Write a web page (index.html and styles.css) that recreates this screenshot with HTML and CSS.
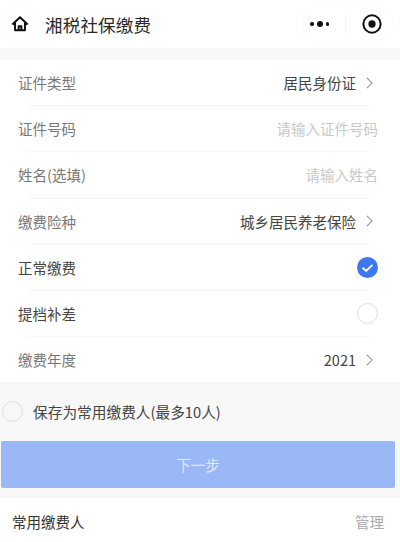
FILE: index.html
```html
<!DOCTYPE html>
<html lang="zh-CN">
<head>
<meta charset="utf-8">
<title>湘税社保缴费</title>
<link rel="stylesheet" href="styles.css">
</head>
<body>
<header class="nav">
  <div class="home-wrap"><svg class="home" viewBox="0 0 20 20" width="18" height="18"><path d="M1.500 10.500 10 2.500l8.500 8M4.500 8.500V17H15.500V8.500M8.500 17V12.500H11.500V17" fill="none" stroke="#111" stroke-width="2.200" stroke-linejoin="round"/></svg></div>
  <h1 class="title">湘税社保缴费</h1>
  <div class="capsule">
    <div class="dots"><i class="dot"></i><i class="dot big"></i><i class="dot"></i></div>
    <div class="sep"></div>
    <div class="target"><svg viewBox="0 0 22 22" width="20" height="20"><circle cx="11" cy="11" r="9.500" fill="none" stroke="#111" stroke-width="2.200"/><circle cx="11" cy="11" r="4" fill="#111"/></svg></div>
  </div>
</header>
<main class="page">
  <section class="form">
    <div class="row"><span class="label">证件类型</span><span class="value">居民身份证</span><svg class="chev" viewBox="0 0 8 14" width="7" height="12"><path d="M1 1l6 6-6 6" fill="none" stroke="#8a8a8a" stroke-width="1.200"/></svg></div>
    <div class="divider"></div>
    <div class="row"><span class="label">证件号码</span><span class="ph">请输入证件号码</span></div>
    <div class="divider"></div>
    <div class="row"><span class="label">姓名(选填)</span><span class="ph">请输入姓名</span></div>
    <div class="divider"></div>
    <div class="row"><span class="label">缴费险种</span><span class="value">城乡居民养老保险</span><svg class="chev" viewBox="0 0 8 14" width="7" height="12"><path d="M1 1l6 6-6 6" fill="none" stroke="#8a8a8a" stroke-width="1.200"/></svg></div>
    <div class="divider"></div>
    <div class="row"><span class="label dark">正常缴费</span><svg class="radio" viewBox="0 0 22 22" width="21" height="21"><circle cx="11" cy="11" r="11" fill="#3c78ee"/><path d="M5.800 11.300 9.500 14.500 16.200 8.200" fill="none" stroke="#fff" stroke-width="2"/></svg></div>
    <div class="divider"></div>
    <div class="row"><span class="label dark">提档补差</span><i class="circle"></i></div>
    <div class="divider"></div>
    <div class="row"><span class="label">缴费年度</span><span class="value">2021</span><svg class="chev" viewBox="0 0 8 14" width="7" height="12"><path d="M1 1l6 6-6 6" fill="none" stroke="#8a8a8a" stroke-width="1.200"/></svg></div>
  </section>
  <div class="save"><i class="circle"></i><span>保存为常用缴费人(最多10人)</span></div>
  <button class="next" type="button">下一步</button>
  <section class="common"><span class="common-title">常用缴费人</span><span class="manage">管理</span></section>
</main>
</body>
</html>
```

FILE: styles.css
```css
* { box-sizing: border-box; }
html, body { margin: 0; height: 100%; }
body { width: 400px; height: 542px; overflow: hidden; background: #fff; color: #333; font-family: "Noto Sans CJK SC", "Noto Sans", sans-serif; display: flex; flex-direction: column; }
.nav { height: 48px; flex: none; display: flex; align-items: center; padding: 0 6px 0 2px; background: #fff; }
.home-wrap { flex: none; width: 36px; height: 36px; border-radius: 50%; border: 1px solid #fcfcfc; display: flex; align-items: center; justify-content: center; }
.title { margin: 0 0 0 7px; font-size: 17.500px; font-weight: 400; color: #2a2a2a; letter-spacing: .2px; flex: 1; }
.capsule { display: flex; align-items: center; width: 98px; height: 34px; border: 1px solid #fcfcfc; border-radius: 17px; }
.dots { width: 48px; padding-right: 3px; display: flex; align-items: center; justify-content: center; gap: 3px; }
.dot { width: 3.500px; height: 3.500px; border-radius: 50%; background: #111; }
.dot.big { width: 6px; height: 6px; }
.sep { width: 1px; height: 20px; background: #f2f2f2; }
.target { flex: 1; padding-left: 5px; display: flex; align-items: center; justify-content: center; }
.page { flex: 1; background: #f8f8f8; min-height: 0; }
.form { margin-top: 12px; background: #fff; }
.row { height: 45.200px; padding: 0 22px 0 18px; display: flex; align-items: center; font-size: 14.500px; }
.divider { height: 1px; margin: 0 30px 0 28px; background: #f6f6f6; }
.label { flex: 1; color: #777; }
.label.dark { color: #444; }
.value { color: #444; }
.ph { color: #c8c8c8; }
.chev { margin: 0 5px 0 10px; flex: none; }
.radio { flex: none; }
.circle { flex: none; display: block; width: 21px; height: 21px; border-radius: 50%; border: 1px solid #ddd; background: #fff; }
.save { height: 59px; display: flex; align-items: center; padding-left: 2px; font-size: 14.700px; color: #444; }
.save .circle { background: transparent; margin-right: 10px; }
.next { display: block; width: 394px; height: 47px; margin: 0 0 0 1px; border: 0; border-radius: 2px; background: #9ab8f6; color: #dfe8fb; font: inherit; font-size: 14.500px; padding: 0; }
.common { margin-top: 10px; height: 60px; background: #fff; display: flex; justify-content: space-between; padding: 13px 16px 0 12px; font-size: 14.500px; }
.common-title { color: #333; }
.manage { color: #aaa; }
```
